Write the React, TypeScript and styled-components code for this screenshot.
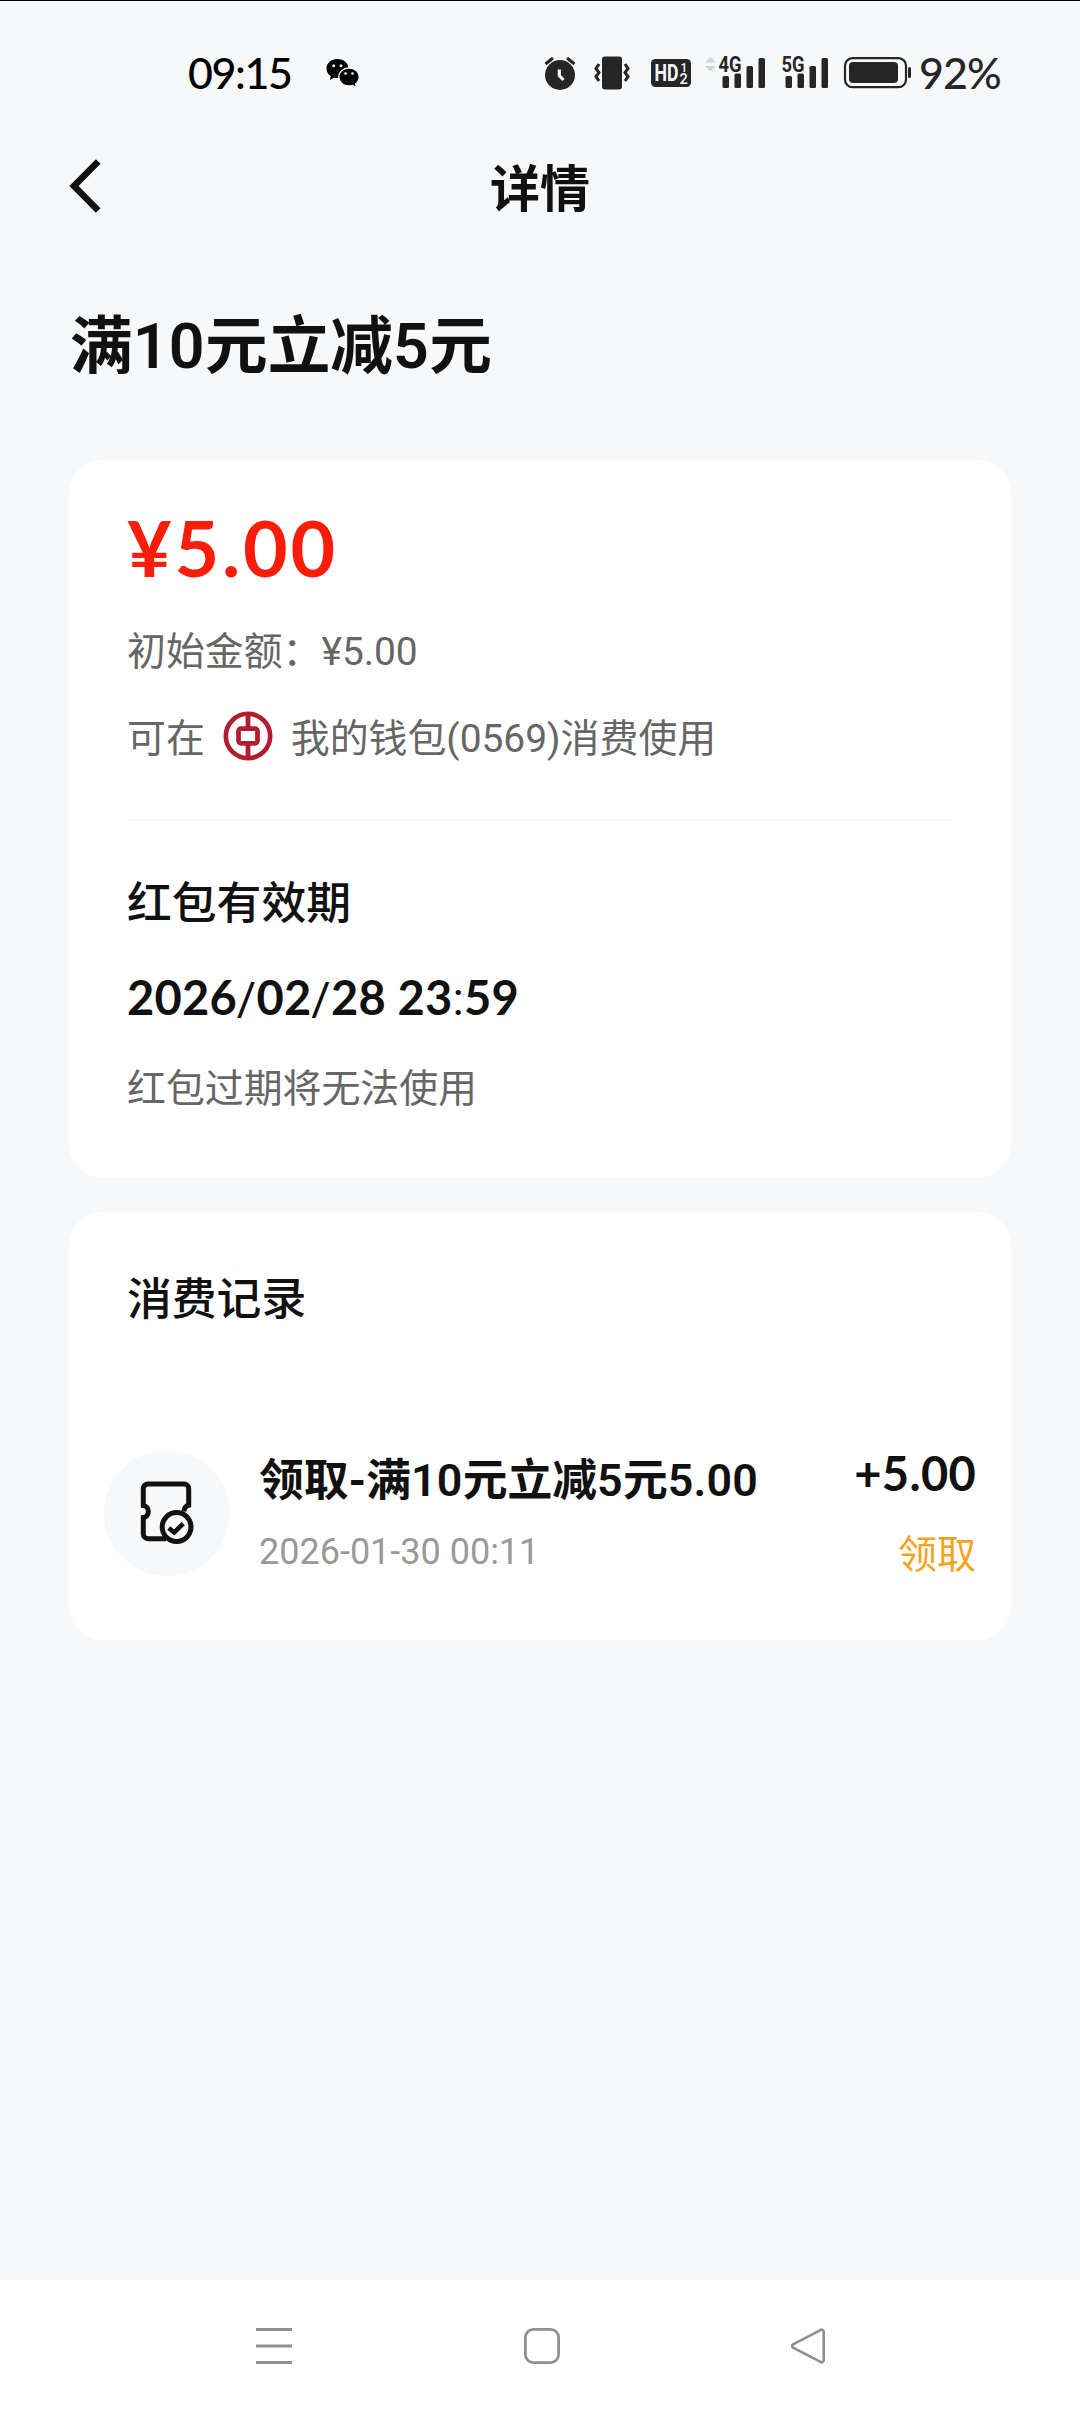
import React from "react";
import styled, { createGlobalStyle } from "styled-components";

const sans = `Roboto, "Noto Sans CJK SC", sans-serif`;
const numeric = `Lato, Roboto, "Noto Sans CJK SC", sans-serif`;

const Global = createGlobalStyle`
  * { box-sizing: border-box; }
  body { margin: 0; background: #f7f8fa; font-family: ${sans}; color: #111; }
  svg { display: block; flex: none; overflow: visible; }
`;

const Screen = styled.div`
  width: 1080px;
  height: 2412px;
  display: flex;
  flex-direction: column;
  background: #f7f8fa;
  border-top: 1px solid #000;
  overflow: hidden;
`;

const StatusBar = styled.header`
  height: 129px;
  flex: none;
  display: flex;
  align-items: center;
  padding: 15px 80px 0 188px;
`;

const StatusText = styled.span<{ $dark?: boolean; $width: number }>`
  width: ${(p) => p.$width}px;
  font-family: ${numeric};
  font-size: 43px;
  font-weight: 500;
  line-height: 50px;
  letter-spacing: ${(p) => (p.$dark ? "-1.4px" : "-0.9px")};
  white-space: nowrap;
  color: ${(p) => (p.$dark ? "#000" : "#262626")};
`;

const StatusIcons = styled.div`
  margin-left: auto;
  display: flex;
  align-items: center;
`;

const Gap = styled.span<{ $w: number }>`
  width: ${(p) => p.$w}px;
  flex: none;
`;

const NavBar = styled.nav`
  height: 116px;
  flex: none;
  display: grid;
  grid-template-columns: 1fr auto 1fr;
  align-items: center;
  padding: 0 66px 4px;
`;

const NavTitle = styled.h1`
  margin: 0;
  padding-top: 8px;
  font-size: 50px;
  line-height: 60px;
  font-weight: 700;
`;

const PageTitle = styled.h2`
  margin: 0;
  flex: none;
  height: 214px;
  padding: 56px 69px 0 70px;
  font-size: 62.7px;
  line-height: 90px;
  font-weight: 700;
  white-space: nowrap;
`;

const Digits = styled.span`
  font-weight: 600;
  letter-spacing: 0.005em;
`;

const Main = styled.main`
  flex: 1;
  display: flex;
  flex-direction: column;
  gap: 34px;
  padding: 0 69px;
`;

const Card = styled.section<{ $height: number }>`
  height: ${(p) => p.$height}px;
  background: #fff;
  border-radius: 34px;
  display: flex;
  flex-direction: column;
`;

const Block = styled.div<{ $top: number }>`
  padding: ${(p) => p.$top}px 58px 0;
`;

const Amount = styled.div`
  height: 103px;
  line-height: 100px;
  font-family: ${numeric};
  font-size: 77px;
  font-weight: 700;
  letter-spacing: 2.8px;
  color: #fa1e0a;
  white-space: nowrap;
`;

const Muted = styled.div<{ $height: number }>`
  display: flex;
  align-items: center;
  height: ${(p) => p.$height}px;
  font-size: 38.9px;
  line-height: 60px;
  color: #666;
  white-space: nowrap;
`;

const BankMark = styled.span`
  margin: 0 18px 7px;
`;

const Divider = styled.hr`
  width: 826px;
  height: 2px;
  margin: 45px 58px 1px;
  border: 0;
  background: #f4f5f6;
`;

const SectionTitle = styled.h3`
  margin: 0;
  font-size: 44.8px;
  line-height: 66px;
  font-weight: 500;
`;

const Expiry = styled.div`
  height: 94px;
  margin-top: 14px;
  display: flex;
  align-items: center;
  font-family: ${numeric};
  font-size: 47px;
  line-height: 94px;
  font-weight: 700;
  letter-spacing: 0.2px;
  white-space: pre;
`;

const Thin = styled.span`
  font-family: Roboto, sans-serif;
  font-weight: 400;
  font-size: 47px;
`;

const Row = styled.div`
  display: flex;
  align-items: flex-start;
  margin-top: 106px;
  padding: 0 35px 0 35px;
`;

const Badge = styled.div`
  width: 126px;
  height: 126px;
  margin-top: 11px;
  border-radius: 50%;
  background: #f7f8fa;
  display: flex;
  align-items: center;
  justify-content: center;
`;

const RowText = styled.div`
  margin-left: 29px;
  display: flex;
  flex-direction: column;
`;

const RowTitle = styled.div`
  font-size: 44.8px;
  line-height: 66px;
  height: 78px;
  padding-top: 9px;
  font-weight: 700;
  white-space: nowrap;
`;

const RowTime = styled.div`
  font-size: 36px;
  line-height: 48px;
  padding-top: 11px;
  color: #999;
  white-space: nowrap;
`;

const RowEnd = styled.div`
  margin-left: auto;
  display: flex;
  flex-direction: column;
  align-items: flex-end;
`;

const Gain = styled.div`
  font-family: ${numeric};
  font-size: 47px;
  line-height: 68px;
  height: 86px;
  font-weight: 700;
  letter-spacing: 0.3px;
  white-space: nowrap;
`;

const Claim = styled.div`
  font-size: 39px;
  line-height: 60px;
  color: #f5a31a;
`;

const SystemNav = styled.footer`
  height: 132px;
  flex: none;
  background: #fff;
  display: flex;
  align-items: flex-start;
  justify-content: space-between;
  padding: 46px 252px 0 254px;
`;

const WeChat = () => (
  <svg width="34" height="30" viewBox="0 0 34 30">
    <path d="M11.5 1C5.2 1 .5 5.200.5 10.600c0 3.200 1.700 5.900 4.300 7.700L3.800 22l4.300-2.300c1.100.3 2.200.4 3.400.4C17.800 20.100 22.500 16 22.500 10.600S17.800 1 11.500 1z" fill="#000" />
    <path d="M23 10c-5.700 0-10.200 4-10.200 9s4.500 9 10.200 9c1.300 0 2.500-.2 3.600-.6l4 1.900-1-3.400c2.300-1.700 3.600-4.100 3.600-6.900 0-5-4.500-9-10.200-9z" fill="#000" stroke="#f7f8fa" strokeWidth="1.300" />
    <circle cx="7.700" cy="7.700" r="1.500" fill="#f7f8fa" />
    <circle cx="15" cy="7.700" r="1.500" fill="#f7f8fa" />
    <circle cx="19.500" cy="15.500" r="1.300" fill="#f7f8fa" />
    <circle cx="26.500" cy="15.500" r="1.300" fill="#f7f8fa" />
  </svg>
);

const Alarm = () => (
  <svg width="32" height="34" viewBox="0 0 32 34" fill="none">
    <circle cx="16" cy="19" r="15" fill="#262626" />
    <path d="M1.500 8 9 2M30.500 8 23 2" stroke="#262626" strokeWidth="3.200" />
    <path d="M15.300 13.500v6l4.200 4.500" stroke="#f7f8fa" strokeWidth="3.200" />
  </svg>
);

const Vibrate = () => (
  <svg width="36" height="34" viewBox="0 0 36 34" fill="none">
    <rect x="8" y="0.500" width="20" height="33" rx="3" fill="#262626" />
    <path d="M5 8 2 12.500l3 4-3 4L5 25M31 8l3 4.500-3 4 3 4L31 25" stroke="#262626" strokeWidth="3" />
  </svg>
);

const HdIcon = () => (
  <svg width="40" height="28" viewBox="0 0 40 28" fontFamily="Roboto, sans-serif" fontWeight="700" fill="#f7f8fa">
    <rect width="40" height="28" rx="4.500" fill="#262626" />
    <text x="3.500" y="22" fontSize="23" textLength="24" lengthAdjust="spacingAndGlyphs">HD</text>
    <text x="29.500" y="13" fontSize="12" fontWeight="500">1</text>
    <text x="28.500" y="25" fontSize="14.500" fontWeight="500">2</text>
  </svg>
);

const DataArrows = () => (
  <svg width="11" height="34" viewBox="0 0 11 34" fill="#d2d3d5">
    <path d="M5.500 1 11 6.500H0zM5.500 15.500 11 10H0z" />
  </svg>
);

const Signal = ({ label }: { label: string }) => (
  <svg width="47" height="34" viewBox="0 0 47 34" fill="#262626">
    <text x="-0.500" y="15.500" fontSize="21.500" fontFamily="Roboto, sans-serif" fontWeight="700" textLength="23" lengthAdjust="spacingAndGlyphs">{label}</text>
    <rect x="3.500" y="20" width="6.500" height="12" rx="1.500" />
    <rect x="15.500" y="17.500" width="6.500" height="14.500" rx="1.500" />
    <rect x="27.500" y="10" width="6.500" height="22" rx="1.500" />
    <rect x="39.500" y="2" width="6.500" height="30" rx="1.500" />
  </svg>
);

const Battery = () => (
  <svg width="67" height="32" viewBox="0 0 67 32" fill="none">
    <rect x="1" y="1.200" width="61" height="29" rx="7.500" stroke="#262626" strokeWidth="2.200" />
    <rect x="5" y="5" width="49" height="21" rx="4" fill="#262626" />
    <rect x="64" y="10" width="3" height="11" rx="1.500" fill="#262626" />
  </svg>
);

const Back = () => (
  <svg width="40" height="56" viewBox="0 0 40 56" fill="none" stroke="#111" strokeWidth="6.600">
    <path d="M32.200 3.500 8 28l24.200 24.500" />
  </svg>
);

const BankLogo = () => (
  <svg width="50" height="50" viewBox="0 0 50 50" fill="none" stroke="#b31b30">
    <circle cx="25" cy="25" r="22.200" strokeWidth="4.600" />
    <path d="M25 3v14M25 33v14" strokeWidth="4.800" />
    <rect x="15.500" y="17.700" width="19" height="14.600" rx="2.500" strokeWidth="4.700" />
  </svg>
);

const Coupon = () => (
  <svg width="54" height="64" viewBox="0 0 54 64" fill="none" stroke="#111" strokeWidth="5">
    <path d="M26 57.700H8a4.700 4.700 0 0 1-4.700-4.700V36.500c3-.4 5-2.800 5-6s-2-5.600-5-6V7.700A4.700 4.700 0 0 1 8 3h36a4.700 4.700 0 0 1 4.700 4.700v16.500c-2.600.6-4.600 2.800-4.800 6.300" />
    <circle cx="36.600" cy="46" r="14.400" />
    <path d="m28.800 47 5.400 4.500 9-8.800" strokeWidth="4.600" />
  </svg>
);

export default function App() {
  return (
    <Screen>
      <Global />
      <StatusBar>
        <StatusText $dark $width={138}>09:15</StatusText>
        <WeChat />
        <StatusIcons>
          <Alarm />
          <Gap $w={18} />
          <Vibrate />
          <Gap $w={21} />
          <HdIcon />
          <Gap $w={14} />
          <DataArrows />
          <Gap $w={3} />
          <Signal label="4G" />
          <Gap $w={15.5} />
          <Signal label="5G" />
          <Gap $w={15.5} />
          <Battery />
          <Gap $w={8} />
          <StatusText $width={81}>92%</StatusText>
        </StatusIcons>
      </StatusBar>
      <NavBar>
        <Back />
        <NavTitle>详情</NavTitle>
      </NavBar>
      <PageTitle>
        满<Digits>10</Digits>元立减<Digits>5</Digits>元
      </PageTitle>
      <Main>
        <Card $height={718}>
          <Block $top={37}>
            <Amount>¥5.00</Amount>
            <Muted $height={104}>初始金额：¥5.00</Muted>
            <Muted $height={70}>
              可在
              <BankMark>
                <BankLogo />
              </BankMark>
              我的钱包(0569)消费使用
            </Muted>
          </Block>
          <Divider />
          <Block $top={49}>
            <SectionTitle>红包有效期</SectionTitle>
            <Expiry>
              <span>2026<Thin>/</Thin>02<Thin>/</Thin>28 23<Thin>:</Thin>59</span>
            </Expiry>
            <Muted $height={87}>红包过期将无法使用</Muted>
          </Block>
        </Card>
        <Card $height={428}>
          <Block $top={55}>
            <SectionTitle>消费记录</SectionTitle>
          </Block>
          <Row>
            <Badge>
              <Coupon />
            </Badge>
            <RowText>
              <RowTitle>
                领取-满<Digits>10</Digits>元立减<Digits>5</Digits>元<Digits>5.00</Digits>
              </RowTitle>
              <RowTime>2026-01-30 00:11</RowTime>
            </RowText>
            <RowEnd>
              <Gain>+5.00</Gain>
              <Claim>领取</Claim>
            </RowEnd>
          </Row>
        </Card>
      </Main>
      <SystemNav>
        <svg width="40" height="40" viewBox="0 0 40 40" stroke="#8f8f8f" strokeWidth="3">
          <path d="M2 3.500h36M2 20h36M2 36.500h36" />
        </svg>
        <svg width="40" height="40" viewBox="-1 0 40 40" fill="none" stroke="#8f8f8f" strokeWidth="2.800">
          <rect x="3.400" y="3.400" width="33.200" height="33.200" rx="8" />
        </svg>
        <svg width="40" height="40" viewBox="0 0 40 40" fill="none" stroke="#8f8f8f" strokeWidth="2.600" strokeLinejoin="round">
          <path d="M33 3.800 5 18.300a2 2 0 0 0 0 3.400L33 36.200a2 2 0 0 0 2.700-1.700v-29A2 2 0 0 0 33 3.800z" />
        </svg>
      </SystemNav>
    </Screen>
  );
}
